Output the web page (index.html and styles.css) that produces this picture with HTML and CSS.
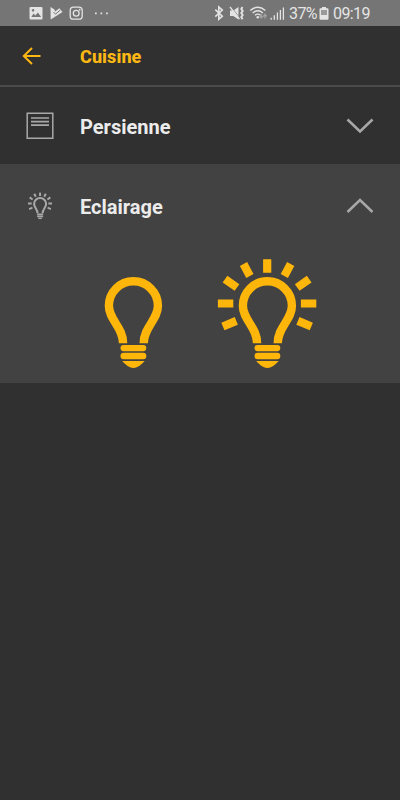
FILE: index.html
```
<!DOCTYPE html>
<html lang="fr">

<head>
    <meta charset="UTF-8">
    <meta name="viewport" content="width=device-width, initial-scale=1.0">
    <title>Cuisine</title>
    <link rel="stylesheet" href="styles.css">
</head>

<body>
    <!-- Shared bulb shapes -->
    <svg class="defs" width="0" height="0">
        <symbol id="bulb" viewBox="0 0 100 112">
            <path d="M40.100 85.200C40.100 69 25.900 62 25.900 47.800a24.500 24.500 0 0 1 49 0C74.900 62 60.700 69 60.700 85.200" fill="none" stroke="currentColor" stroke-width="8.400"/>
            <rect x="37.500" y="87" width="25.800" height="6.200" rx="3.100" fill="currentColor"/>
            <rect x="37.500" y="94.800" width="25.800" height="6.400" rx="3.200" fill="currentColor"/>
            <path d="M39.200 103h22.400c-3 3.200-6.500 6.900-11.200 6.900S42.200 106.200 39.200 103z" fill="currentColor"/>
        </symbol>
        <symbol id="rays" viewBox="0 0 100 112">
            <path d="M50.200 1.200v13.600M26.500 6l6.400 12M73.700 6l-6.400 12M8 21.100l12 8.400M92.200 21.100l-12 8.400M.9 45.500h15.400M99.300 45.500H83.900M5.900 68.500l13.400-5.600M94.300 68.500l-13.400-5.600" fill="none" stroke="currentColor" stroke-width="8.200"/>
        </symbol>
    </svg>

    <div class="status">
        <svg class="status-left" width="84" height="26" viewBox="0 0 84 26">
            <path fill="currentColor" fill-rule="evenodd" d="M1.500 7h11q1 0 1 1v10.500q0 1-1 1h-11q-1 0-1-1V8q0-1 1-1zM2.300 17h9.800l-3.200-4.600-2.600 3-1.700-1.800zM4 9a1.300 1.300 0 1 0 .1 0z"/>
            <path fill="currentColor" d="M21.500 7l4 2.500.5 2 4.500-3.200L33.500 12 21.700 19.500z"/>
            <path fill="none" stroke="#757575" stroke-width="1" d="M24.500 12l2 2.200 5-4.400"/>
            <rect x="41.200" y="7.200" width="12" height="12" rx="3.300" fill="none" stroke="currentColor" stroke-width="1.300"/>
            <circle cx="47.200" cy="13.200" r="2.900" fill="none" stroke="currentColor" stroke-width="1.300"/>
            <circle cx="50.700" cy="9.700" r=".9" fill="currentColor"/>
            <path fill="currentColor" d="M66 12.500h1.700v1.700H66zM71.500 12.500h1.700v1.700h-1.700zM77.100 12.500h1.700v1.700h-1.700z"/>
        </svg>
        <div class="status-right">
            <svg width="71" height="26" viewBox="0 0 71 26">
                <path d="M1.300 9.700l7 6.500-3.500 3.100V7l3.500 3.100-7 6.500" fill="none" stroke="currentColor" stroke-width="1.600"/>
                <path d="M16 10.500h3.300L24.500 7v12.500l-5.200-3.500H16z" fill="currentColor"/>
                <path d="M17.500 7l8 10.500" stroke="#757575" stroke-width=".7"/>
                <path d="M16 7l9.500 12.200" stroke="currentColor" stroke-width="1.300"/>
                <path d="M28.500 7l-1.200 2 1.400 2-1.400 2 1.400 2-1.400 2 1.200 2.300" fill="none" stroke="currentColor" stroke-width="1.900"/>
                <path d="M36.300 10.500q7.500-6.500 15 0M38.700 13q5.100-4.300 10.200 0M41 15.300q2.800-2.300 5.600 0" fill="none" stroke="currentColor" stroke-width="1.400"/>
                <circle cx="43.800" cy="17.200" r="1.300" fill="currentColor"/>
                <path d="M47.300 14v3.500M45.700 16l1.600 2 1.600-2M51 18.500V15M49.400 16.300l1.600-2 1.600 2" fill="none" stroke="#a5a5a5" stroke-width="1.200"/>
                <path d="M57.200 17.700v2M60.300 15.200v4.500M63.400 12.500v7.200M66.400 10v9.700M69.400 7.500v12.200" stroke="currentColor" stroke-width="1.300"/>
            </svg>
            <span class="percent">37%</span>
            <svg class="battery" width="10" height="26" viewBox="0 0 10 26">
                <path d="M3 7h4v1.200h1.500q1 0 1 1v9.500q0 1-1 1h-7q-1 0-1-1V9.200q0-1 1-1H3z" fill="currentColor"/>
                <path d="M2 10h6v5H2z" fill="#999"/>
            </svg>
            <span class="clock">09:19</span>
        </div>
    </div>

    <div class="header">
        <svg class="back" width="20" height="18" viewBox="0 0 20 18">
            <path d="M18.500 9H1.800M10 1L1.800 9l8.200 8" fill="none" stroke="currentColor" stroke-width="2"/>
        </svg>
        <h1>Cuisine</h1>
    </div>

    <div class="row">
        <svg class="icon" width="28" height="28" viewBox="0 0 28 28">
            <path d="M1.200 1.300h25.600v25H1.200z" fill="none" stroke="currentColor" stroke-width="1.500"/>
            <path d="M5 6h18M5 9.600h18M5 13.200h18" stroke="currentColor" stroke-width="1.700"/>
        </svg>
        <h2>Persienne</h2>
        <svg class="chevron" width="28" height="16" viewBox="0 0 28 16">
            <path d="M1.500 1.500L14 13.500 26.500 1.500" fill="none" stroke="currentColor" stroke-width="2.500"/>
        </svg>
    </div>

    <div class="panel">
        <div class="row">
            <svg class="icon" width="28" height="28" viewBox="0 0 114 114">
                <use href="#bulb" x="7" y="1" width="100" height="112"/>
                <use href="#rays" x="7" y="1" width="100" height="112"/>
            </svg>
            <h2>Eclairage</h2>
            <svg class="chevron" width="28" height="16" viewBox="0 0 28 16">
                <path d="M1.500 14L14 2l12.500 12" fill="none" stroke="currentColor" stroke-width="2.500"/>
            </svg>
        </div>
        <div class="lamps">
            <svg width="100" height="112">
                <use href="#bulb"/>
            </svg>
            <svg width="100" height="112">
                <use href="#bulb"/>
                <use href="#rays"/>
            </svg>
        </div>
    </div>
</body>

</html>
```
FILE: styles.css
```
body {
    margin: 0;
    background-color: #303030;
    font-family: Roboto, sans-serif;
}

svg {
    display: block;
    flex: none;
}

.defs {
    position: absolute;
}

.status {
    display: flex;
    justify-content: space-between;
    height: 26px;
    padding: 0 29px;
    background-color: #757575;
    color: #e4e4e4;
}

.status-right {
    display: flex;
    font-size: 16px;
    line-height: 28px;
}

.percent {
    width: 28px;
    margin-left: 4px;
    letter-spacing: -0.6px;
}

.battery {
    margin: 0 4px 0 2px;
}

.clock {
    width: 38px;
    letter-spacing: -0.6px;
}

.header {
    display: flex;
    align-items: center;
    height: 59px;
    padding-left: 22px;
    border-bottom: 2px solid #4a4a4a;
    color: #fdb813;
}

.header h1 {
    margin: 2px 0 0 38px;
    font-size: 18px;
    font-weight: 800;
    letter-spacing: 0.1px;
}

.row {
    display: flex;
    align-items: center;
    height: 77px;
    padding: 0 26px;
    color: #a8a8a8;
}

.row h2 {
    flex: 1;
    margin: 2px 0 0 26px;
    font-size: 20px;
    font-weight: 700;
    color: #ececec;
}

.panel {
    height: 218.5px;
    background-color: #424242;
}

.panel .row {
    height: 83px;
}

.lamps {
    display: flex;
    justify-content: center;
    gap: 33.3px;
    padding-top: 11px;
    color: #ffb60a;
}
```
